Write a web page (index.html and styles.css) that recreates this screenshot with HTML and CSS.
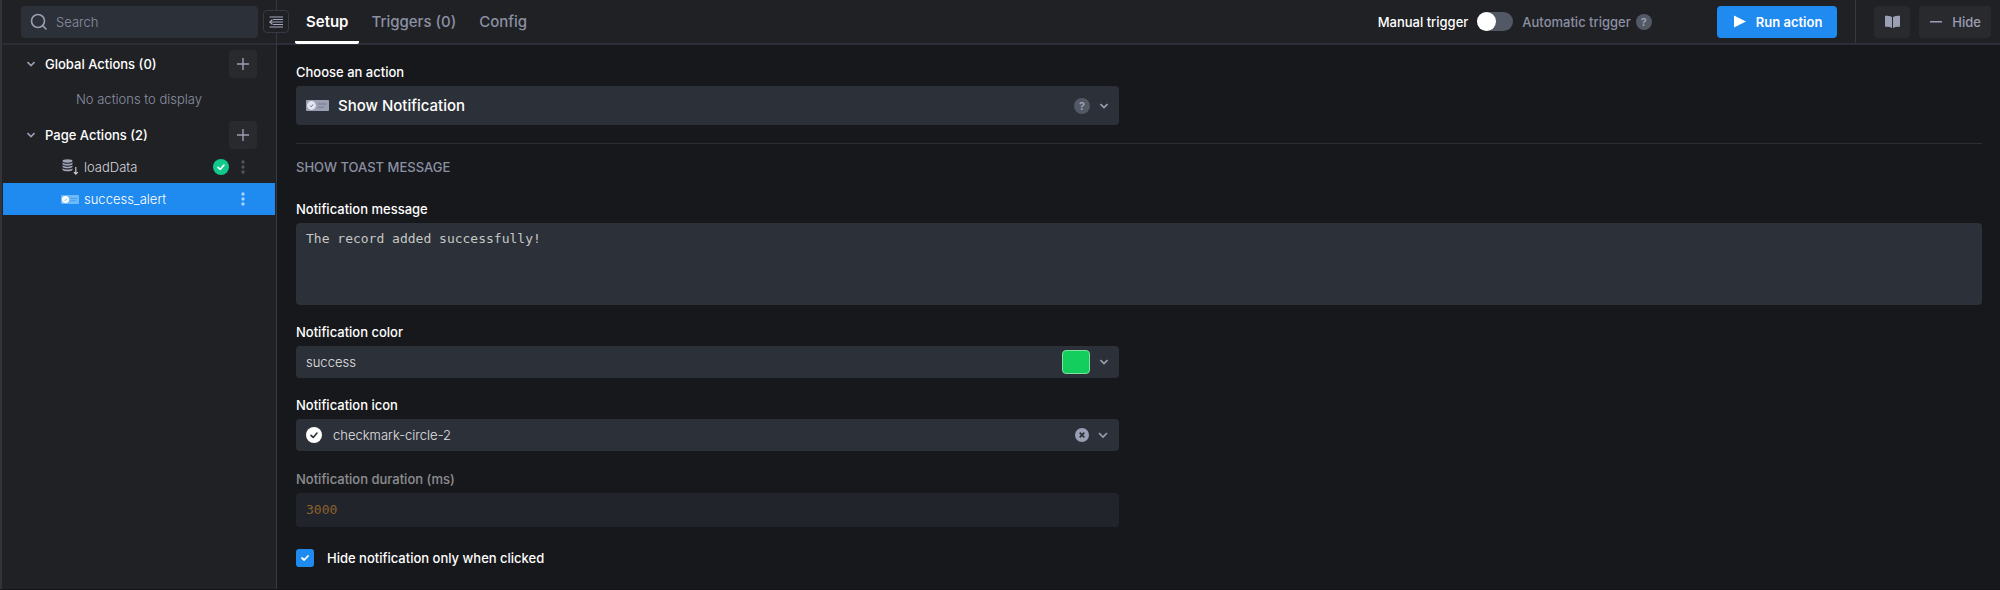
FILE: index.html
```html
<!DOCTYPE html>
<html lang="en">

<head>
    <meta charset="UTF-8">
    <meta name="viewport" content="width=device-width, initial-scale=1.0">
    <title>Actions</title>
    <link rel="stylesheet" href="styles.css">
</head>

<body>

    <aside class="sidebar">
        <div class="sidebar-header">
            <label class="search">
                <svg width="18" height="18" viewBox="0 0 18 18" fill="none" stroke="currentColor" stroke-width="1.6" stroke-linecap="round">
                    <circle cx="8" cy="8" r="6.5" />
                    <path d="M12.8 12.8L16 16" />
                </svg>
                <input type="search" placeholder="Search" aria-label="Search">
            </label>
            <button class="collapse-button" aria-label="Collapse sidebar">
                <svg width="14" height="12" viewBox="0 0 14 12" fill="none" stroke="currentColor" stroke-width="1.2" stroke-linecap="round">
                    <path d="M1 1h12.500M1 6h12.500M4.500 3.500h9M4.500 8.500h9M1 11h12.500" />
                    <path d="M3 4L1 6l2 2" />
                </svg>
            </button>
        </div>

        <div class="group-header">
            <svg class="chevron" width="8" height="6" viewBox="0 0 8 6"><path d="M.5 1L4 4.5 7.5 1" /></svg>
            <h2>Global Actions (0)</h2>
            <button class="add-button" aria-label="Add global action">
                <svg width="12" height="12" viewBox="0 0 12 12" stroke="currentColor" stroke-width="1.4"><path d="M6 0v12M0 6h12" /></svg>
            </button>
        </div>
        <p class="empty">No actions to display</p>

        <div class="group-header">
            <svg class="chevron" width="8" height="6" viewBox="0 0 8 6"><path d="M.5 1L4 4.5 7.5 1" /></svg>
            <h2>Page Actions (2)</h2>
            <button class="add-button" aria-label="Add page action">
                <svg width="12" height="12" viewBox="0 0 12 12" stroke="currentColor" stroke-width="1.4"><path d="M6 0v12M0 6h12" /></svg>
            </button>
        </div>
        <ul class="actions">
            <li class="action">
                <svg class="action-icon" width="18" height="16" viewBox="0 0 18 16" fill="#a0a4b8">
                    <ellipse cx="6.5" cy="2" rx="5" ry="1.7" />
                    <path d="M1.5 3.4c1 1.8 9 1.8 10 0v1.5c-1 2-9 2-10 0zM1.5 6.3c1 1.8 9 1.8 10 0v1.5c-1 2-9 2-10 0zM1.5 9.2c1 1.8 9 1.8 10 0v1.5c-1 2-9 2-10 0z" />
                    <path d="M14.8 8v7M12.8 13l2 2.2 2-2.2" fill="none" stroke="#d5d8e2" stroke-width="1.1" />
                </svg>
                <span class="action-name">loadData</span>
                <svg class="status" width="16" height="16" viewBox="0 0 16 16" fill="none">
                    <circle cx="8" cy="8" r="8" fill="#10c98b" />
                    <path d="M5 8.3l2.2 2.1L11 6" stroke="#fff" stroke-width="1.6" stroke-linecap="round" stroke-linejoin="round" />
                </svg>
                <button class="more-button" aria-label="More">
                    <svg width="4" height="14" viewBox="0 0 4 14" fill="currentColor"><circle cx="2" cy="2" r="1.7" /><circle cx="2" cy="7" r="1.7" /><circle cx="2" cy="12" r="1.7" /></svg>
                </button>
            </li>
            <li class="action active">
                <svg class="action-icon" width="18" height="9" viewBox="0 0 18 9">
                    <rect width="18" height="9" rx="1" fill="#6cbaf8" />
                    <circle cx="4.5" cy="4.5" r="3.6" fill="#fff" />
                    <path d="M3.2 4.6l1 1 1.7-2" fill="none" stroke="#6cbaf8" stroke-width=".8" />
                    <path d="M9.5 3.5h6.5M9.5 5.7h5" stroke="#449ff0" />
                </svg>
                <span class="action-name">success_alert</span>
                <button class="more-button" aria-label="More">
                    <svg width="4" height="14" viewBox="0 0 4 14" fill="currentColor"><circle cx="2" cy="2" r="1.7" /><circle cx="2" cy="7" r="1.7" /><circle cx="2" cy="12" r="1.7" /></svg>
                </button>
            </li>
        </ul>
    </aside>

    <main class="main">
        <header class="toolbar">
            <nav class="tabs">
                <button class="tab active">Setup</button>
                <button class="tab">Triggers (0)</button>
                <button class="tab">Config</button>
            </nav>
            <label class="trigger">
                <span class="trigger-on">Manual trigger</span>
                <input type="checkbox" class="switch">
                <span>Automatic trigger</span>
            </label>
            <span class="help">?</span>
            <button class="run-button">
                <svg width="12" height="13" viewBox="0 0 12 13" fill="currentColor"><path d="M0 .5v12l12-6z" /></svg>
                Run action
            </button>
            <div class="panel-buttons">
                <button class="panel-button" aria-label="Docs">
                    <svg width="15" height="13" viewBox="0 0 15 13" fill="currentColor"><path d="M0 .8Q4 .3 7 2v11Q4 11.3 0 11.8zM15 .8Q11 .3 8 2v11q3-1.7 7-1.2z" /></svg>
                </button>
                <button class="panel-button">
                    <svg width="12" height="2" viewBox="0 0 12 2" fill="currentColor"><rect width="12" height="1.5" /></svg>
                    Hide
                </button>
            </div>
        </header>

        <form class="settings">
            <div class="field half">
                <label for="action">Choose an action</label>
                <div class="select-box large">
                    <svg width="23" height="11" viewBox="0 0 23 11">
                        <rect width="23" height="11" rx="1" fill="#9a9fb4" />
                        <circle cx="5.5" cy="5.5" r="4.4" fill="#e4e6ef" />
                        <path d="M4 5.6l1.2 1.2 2-2.4" fill="none" stroke="#70758a" />
                        <path d="M12 4h8.5M12 7.2h6" stroke="#757a8d" />
                    </svg>
                    <select id="action">
                        <option>Show Notification</option>
                    </select>
                    <span class="help">?</span>
                    <svg class="chevron" width="8" height="6" viewBox="0 0 8 6"><path d="M.5 1L4 4.5 7.5 1" /></svg>
                </div>
            </div>

            <h3>SHOW TOAST MESSAGE</h3>

            <div class="field">
                <label for="message">Notification message</label>
                <textarea id="message">The record added successfully!</textarea>
            </div>

            <div class="field half">
                <label for="color">Notification color</label>
                <div class="select-box">
                    <select id="color">
                        <option>success</option>
                    </select>
                    <span class="swatch"></span>
                    <svg class="chevron" width="8" height="6" viewBox="0 0 8 6"><path d="M.5 1L4 4.5 7.5 1" /></svg>
                </div>
            </div>

            <div class="field half">
                <label for="icon">Notification icon</label>
                <div class="select-box with-icon">
                    <svg width="16" height="16" viewBox="0 0 16 16" fill="none">
                        <circle cx="8" cy="8" r="8" fill="#fff" />
                        <path d="M5 8.3l2.2 2.1L11 6" stroke="#2c3038" stroke-width="1.6" stroke-linecap="round" stroke-linejoin="round" />
                    </svg>
                    <select id="icon">
                        <option>checkmark-circle-2</option>
                    </select>
                    <button type="button" class="clear-button" aria-label="Clear">
                        <svg width="14" height="14" viewBox="0 0 14 14">
                            <circle cx="7" cy="7" r="7" fill="#9a9fb4" />
                            <path d="M4.7 4.7l4.6 4.6M9.3 4.7L4.7 9.3" stroke="#2c3038" stroke-width="1.7" />
                        </svg>
                    </button>
                    <svg class="chevron" width="10" height="7" viewBox="0 0 10 7"><path d="M1 1l4 4 4-4" /></svg>
                </div>
            </div>

            <div class="field half disabled">
                <label for="duration">Notification duration (ms)</label>
                <input type="text" id="duration" value="3000" disabled>
            </div>

            <label class="check">
                <input type="checkbox" checked>
                <svg class="tick" width="10" height="8" viewBox="0 0 10 8" fill="none"><path d="M2 4l2.2 2L8 2" stroke="#fff" stroke-width="1.8" stroke-linecap="round" stroke-linejoin="round" /></svg>
                Hide notification only when clicked
            </label>
        </form>
    </main>

</body>

</html>
```
FILE: styles.css
```css
* {
    box-sizing: border-box;
}

body {
    margin: 0;
    min-height: 100vh;
    display: flex;
    background-color: #17181c;
    border-bottom: 1px solid #121317;
    color: #fff;
    font-family: Inter, sans-serif;
    font-size: 13px;
    line-height: 16px;
}

button,
input,
select,
textarea {
    font: inherit;
    color: inherit;
    border: none;
    outline: none;
    margin: 0;
    padding: 0;
    background: none;
}

button {
    display: flex;
    align-items: center;
    justify-content: center;
    cursor: pointer;
}

svg {
    flex-shrink: 0;
}

.chevron {
    fill: none;
    stroke: #9a9fb4;
    stroke-width: 1.6;
}

/* Sidebar */

.sidebar {
    width: 277px;
    flex-shrink: 0;
    background-color: #202125;
    border-left: 2px solid #33343b;
    border-right: 1px solid #363845;
}

.sidebar-header {
    position: relative;
    height: 45px;
    padding: 6px 18px 0 19px;
    border-bottom: 2px solid #2c2d34;
}

.search {
    display: flex;
    align-items: center;
    gap: 8px;
    height: 32px;
    padding: 0 9px;
    border-radius: 4px;
    background-color: #2c3038;
    color: #9a9fb4;
}

.search input {
    flex: 1;
    min-width: 0;
    font-weight: 300;
}

.search input::placeholder {
    color: #8b90a3;
}

.collapse-button {
    position: absolute;
    top: 10px;
    right: -13px;
    width: 26px;
    height: 23px;
    border: 1px solid #363845;
    border-radius: 4px;
    background-color: #202125;
    color: #a4a9bd;
}

.group-header {
    display: flex;
    align-items: center;
    padding: 5px 19px 0 25px;
}

.group-header h2 {
    flex: 1;
    margin: 0 0 0 10px;
    font-size: 13px;
    font-weight: 500;
}

.add-button {
    width: 28px;
    height: 28px;
    border-radius: 4px;
    background-color: #292a2e;
    color: #9a9fb4;
}

.empty {
    margin: 0;
    padding: 13px 0 9px;
    color: #8b90a3;
    font-weight: 300;
    text-align: center;
}

.actions {
    list-style: none;
    margin: 2px 1px 0;
    padding: 0;
}

.action {
    display: flex;
    align-items: center;
    height: 32px;
    padding: 0 24px 0 58px;
    color: #d5d7dd;
    font-weight: 300;
}

.action.active {
    background-color: #1f8aef;
    color: #fff;
}

.action-name {
    flex: 1;
    margin-left: 5px;
}

.more-button {
    width: 16px;
    height: 24px;
    margin-left: 6px;
    color: #50525c;
}

.active .more-button {
    color: #a5d3fa;
}

/* Toolbar */

.main {
    flex: 1;
    min-width: 0;
}

.toolbar {
    display: flex;
    align-items: center;
    height: 45px;
    padding-right: 9px;
    background-color: #202125;
    border-bottom: 2px solid #2c2d38;
    font-weight: 500;
}

.tabs {
    display: flex;
    align-self: stretch;
    flex: 1;
    gap: 1px;
    padding-left: 18px;
}

.tab {
    height: 44px;
    padding: 3px 11px 0;
    border-bottom: 3px solid transparent;
    border-radius: 2px;
    color: #8b90a3;
    font-size: 15px;
    font-weight: 500;
}

.tab.active {
    border-bottom-color: #fff;
    color: #fff;
    font-weight: 600;
}

.trigger {
    display: flex;
    align-items: center;
    gap: 9px;
    color: #8b90a3;
}

.trigger-on {
    color: #fff;
}

.switch {
    appearance: none;
    display: flex;
    width: 36px;
    height: 19px;
    border-radius: 10px;
    background-color: #535865;
}

.switch::before {
    content: "";
    width: 19px;
    height: 19px;
    border-radius: 50%;
    background-color: #fff;
}

.switch:checked {
    justify-content: flex-end;
}

.help {
    width: 16px;
    height: 16px;
    border-radius: 50%;
    background-color: #535865;
    color: #a0a4b8;
    font-size: 11px;
    font-weight: 600;
    text-align: center;
}

.toolbar .help {
    margin-left: 5px;
}

.run-button {
    gap: 10px;
    height: 32px;
    margin: 0 18px 0 65px;
    padding: 0 15px 0 17px;
    border-radius: 4px;
    background-color: #1f8aef;
    font-weight: 600;
}

.panel-buttons {
    display: flex;
    align-items: center;
    align-self: stretch;
    gap: 9px;
    padding-left: 18px;
    border-left: 1px solid #363845;
}

.panel-button {
    gap: 10px;
    height: 32px;
    padding: 0 10px 0 11px;
    border-radius: 4px;
    background-color: #292a2e;
    color: #9a9fb4;
}

/* Settings form */

.settings {
    padding: 19px 18px 19px 19px;
}

.field {
    display: flex;
    flex-direction: column;
    gap: 6px;
    margin-bottom: 19px;
    font-weight: 500;
}

.half {
    width: calc(50% - 20px);
}

.select-box {
    display: flex;
    align-items: center;
    height: 32px;
    padding: 0 11px 0 10px;
    border-radius: 4px;
    background-color: #2c3038;
}

.select-box select {
    appearance: none;
    flex: 1;
    min-width: 0;
    color: #e1e2e6;
    font-weight: 300;
}

.select-box .chevron {
    margin-left: 10px;
}

.select-box.large {
    height: 39px;
}

.large select {
    margin-left: 9px;
    color: #fff;
    font-size: 15px;
    font-weight: 500;
}

.with-icon select {
    margin-left: 11px;
}

.with-icon .chevron {
    margin-left: 9px;
}

.swatch {
    width: 28px;
    height: 24px;
    border: 1px solid #7fe0a0;
    border-radius: 4px;
    background-color: #13ce5c;
}

h3 {
    margin: -1px 0 26px;
    padding-top: 15px;
    border-top: 1px solid #2c2d33;
    color: #8b90a3;
    font-size: 13px;
    font-weight: 500;
}

textarea,
#duration {
    padding: 8px 10px;
    border-radius: 4px;
    background-color: #2c3038;
    color: #c5c8c6;
    font-family: "DejaVu Sans Mono", monospace;
    font-size: 13px;
    font-weight: 400;
}

textarea {
    height: 82px;
    resize: none;
}

#duration {
    height: 34px;
    padding: 7px 10px 9px;
    color: #f5a742;
}

.disabled {
    opacity: .5;
}

.disabled label {
    margin-top: 1px;
}

.check {
    display: flex;
    align-items: center;
    gap: 13px;
    margin-top: 22px;
    font-weight: 500;
}

.check input {
    appearance: none;
    width: 18px;
    height: 18px;
    border-radius: 3px;
    background-color: #1f8aef;
}

/* pulled back over the box */
.tick {
    margin-left: -27px;
    margin-right: 4px;
}
```
